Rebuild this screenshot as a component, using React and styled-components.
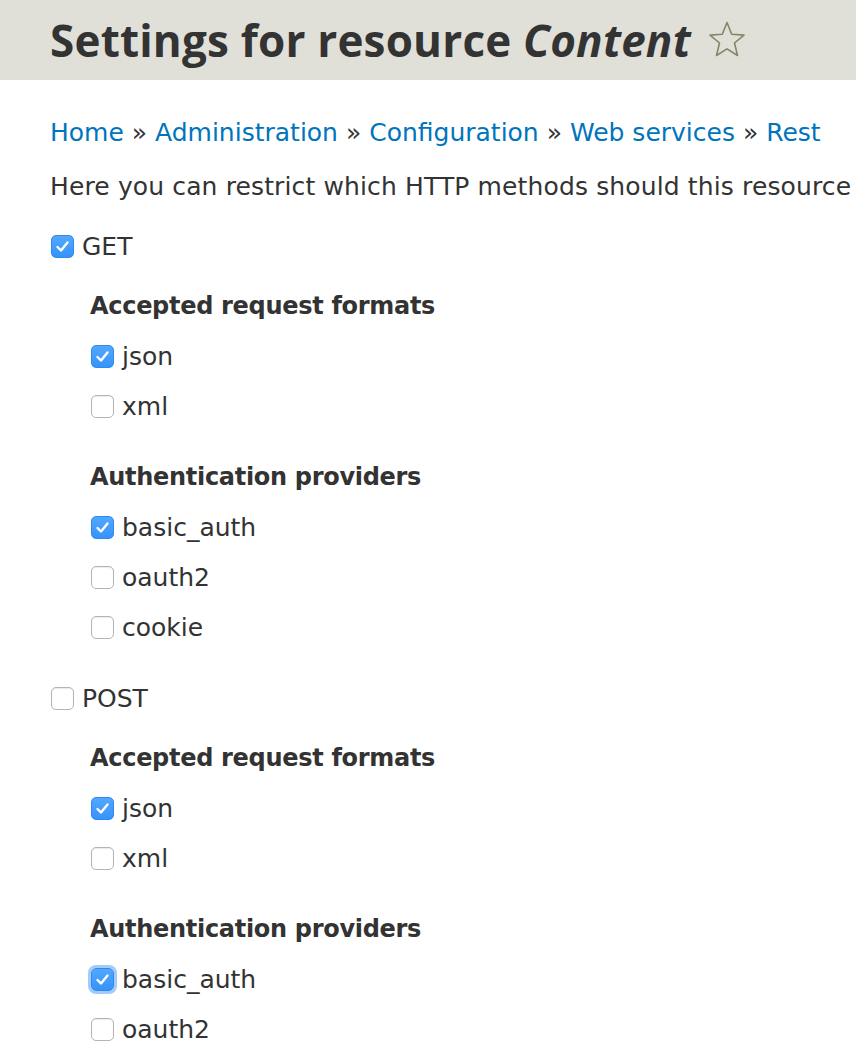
import styled, { createGlobalStyle } from "styled-components";

const GlobalStyle = createGlobalStyle`
  html, body {
    margin: 0;
    padding: 0;
    background: #fff;
    overflow-x: hidden;
  }
  body {
    font-family: "DejaVu Sans", "Liberation Sans", sans-serif;
    color: #333;
  }
`;

const Header = styled.div`
  height: 80px;
  background: #e0e0d8;
  display: flex;
  align-items: center;
  padding-left: 50px;
`;

const Title = styled.h1`
  margin: 0;
  font-family: "Open Sans", "DejaVu Sans", sans-serif;
  font-size: 44px;
  font-weight: 700;
  letter-spacing: 0.2px;
  color: #333;
  display: flex;
  align-items: center;
  gap: 17px;
  white-space: nowrap;

  em {
    font-style: italic;
  }
`;

const Content = styled.div`
  padding: 0 50px;
`;

const Breadcrumb = styled.nav`
  margin-top: 38px;
  line-height: 30px;
  font-size: 25px;
  white-space: nowrap;

  a {
    color: #0074bd;
    text-decoration: none;
  }
`;

const Sep = styled.span`
  color: #333;
`;

const Description = styled.p`
  margin: 24px 0 0;
  line-height: 30px;
  font-size: 25px;
  letter-spacing: 0.13px;
  white-space: nowrap;
`;

const Method = styled.div`
  margin-top: ${(p) => (p.$first ? "19px" : "21px")};
`;

const Nested = styled.div`
  padding-left: 40px;
  margin-top: 10px;
`;

const Group = styled.div`
  & + & {
    margin-top: 21px;
  }
`;

const GroupTitle = styled.div`
  height: 50px;
  display: flex;
  align-items: center;
  font-size: 24px;
  font-weight: 700;
  letter-spacing: -0.3px;
`;

const Row = styled.label`
  height: 50px;
  display: flex;
  align-items: center;
  gap: 8px;
  font-size: 25px;
`;

const Box = styled.span`
  width: 23px;
  height: 23px;
  margin-left: 1px;
  box-sizing: border-box;
  border-radius: 5px;
  display: flex;
  align-items: center;
  justify-content: center;
  flex-shrink: 0;
  background: ${(p) => (p.$checked ? "linear-gradient(#52a8ff, #3593fb)" : "#fff")};
  border: 1px solid ${(p) => (p.$checked ? "#3189ee" : "#b4b4b4")};
  box-shadow: ${(p) =>
    p.$focused
      ? "0 0 0 3px rgba(100, 168, 245, 0.6)"
      : p.$checked
      ? "none"
      : "inset 0 1px 1px rgba(0,0,0,0.08)"};
`;

const Star = () => (
  <svg width="38" height="38" viewBox="0 0 38 38" fill="none">
    <path
      d="M19 1.5 L23.7 13.3 L36 14.1 L26.5 22 L29.5 34.5 L19 27.8 L8.5 34.5 L11.5 22 L2 14.1 L14.3 13.3 Z"
      stroke="#868469"
      strokeWidth="1.6"
      strokeLinejoin="round"
    />
  </svg>
);

const Checkbox = ({ checked, focused, label }) => (
  <Row>
    <Box $checked={checked} $focused={focused}>
      {checked && (
        <svg width="15" height="15" viewBox="0 0 15 15">
          <path
            d="M2.5 8 L6 11.5 L12.5 3.5"
            stroke="#fff"
            strokeWidth="2.4"
            fill="none"
            strokeLinecap="round"
            strokeLinejoin="round"
          />
        </svg>
      )}
    </Box>
    <span>{label}</span>
  </Row>
);

const methods = [
  {
    name: "GET",
    checked: true,
    formats: { json: true, xml: false },
    auth: [
      ["basic_auth", true],
      ["oauth2", false],
      ["cookie", false],
    ],
  },
  {
    name: "POST",
    checked: false,
    formats: { json: true, xml: false },
    auth: [
      ["basic_auth", true, true],
      ["oauth2", false],
    ],
  },
];

export default function App() {
  return (
    <>
      <GlobalStyle />
      <Header>
        <Title>
          <span>
            Settings for resource <em>Content</em>
          </span>
          <Star />
        </Title>
      </Header>
      <Content>
        <Breadcrumb>
          <a href="#">Home</a> <Sep>»</Sep> <a href="#">Administration</a>{" "}
          <Sep>»</Sep> <a href="#">Configuration</a> <Sep>»</Sep>{" "}
          <a href="#">Web services</a> <Sep>»</Sep> <a href="#">Rest</a>
        </Breadcrumb>
        <Description>
          Here you can restrict which HTTP methods should this resource
        </Description>
        {methods.map((m, i) => (
          <Method key={m.name} $first={i === 0}>
            <Checkbox checked={m.checked} label={m.name} />
            <Nested>
              <Group>
                <GroupTitle>Accepted request formats</GroupTitle>
                {Object.entries(m.formats).map(([k, v]) => (
                  <Checkbox key={k} checked={v} label={k} />
                ))}
              </Group>
              <Group>
                <GroupTitle>Authentication providers</GroupTitle>
                {m.auth.map(([k, v, f]) => (
                  <Checkbox key={k} checked={v} focused={f} label={k} />
                ))}
              </Group>
            </Nested>
          </Method>
        ))}
      </Content>
    </>
  );
}
